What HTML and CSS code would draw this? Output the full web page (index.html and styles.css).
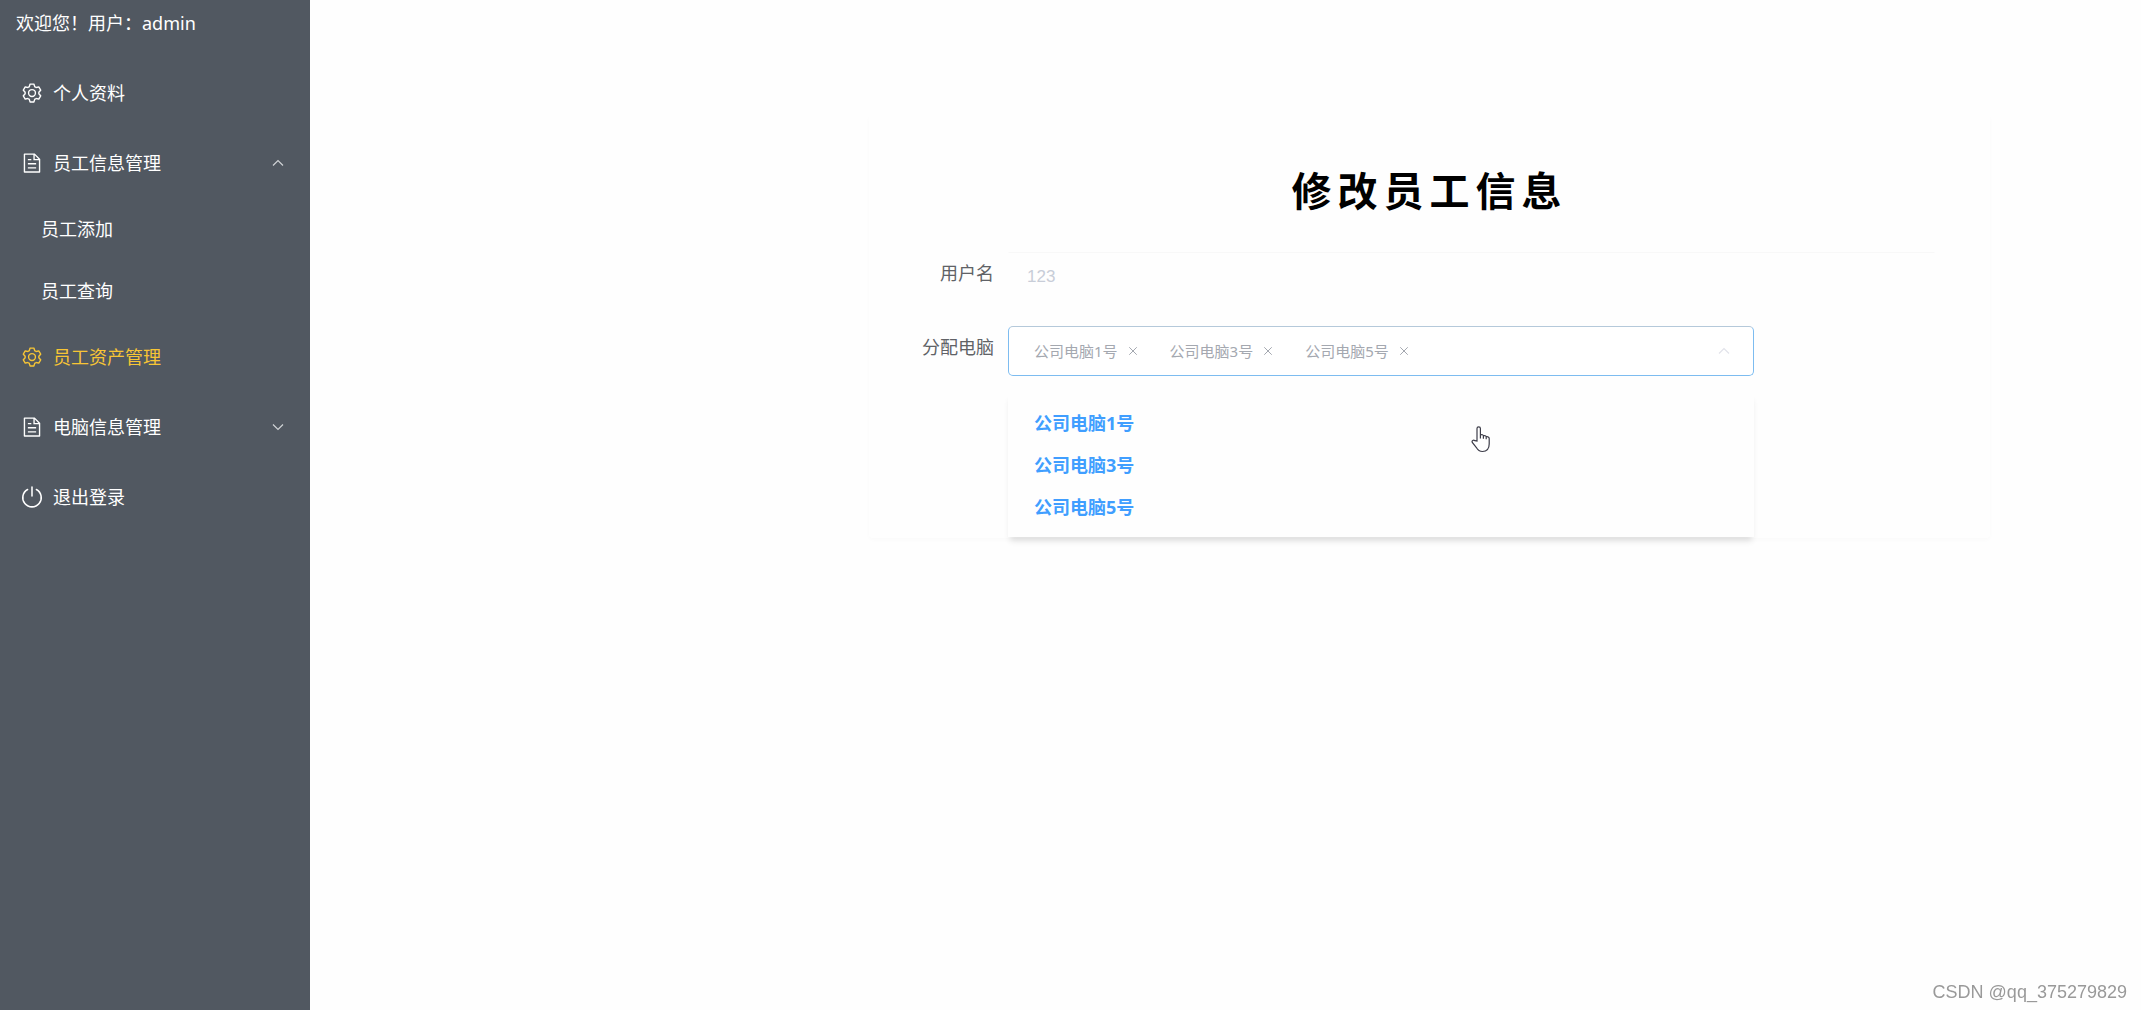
FILE: index.html
```html
<!DOCTYPE html>
<html lang="zh-CN">
<head>
<meta charset="utf-8">
<title>修改员工信息</title>
<link rel="stylesheet" href="styles.css">
</head>
<body>
<svg class="defs" aria-hidden="true">
  <symbol id="gear" viewBox="0 0 1024 1024"><path d="M600.704 64a32 32 0 0 1 30.464 22.208l35.2 109.376c14.784 7.232 28.928 15.36 42.432 24.512l112.384-24.192a32 32 0 0 1 34.432 15.36L944.32 364.8a32 32 0 0 1-4.032 37.504l-77.12 85.12a357.120 357.120 0 0 1 0 49.024l77.12 85.248a32 32 0 0 1 4.032 37.504l-88.704 153.600a32 32 0 0 1-34.432 15.296L708.800 803.904c-13.440 9.088-27.648 17.280-42.368 24.512l-35.264 109.376A32 32 0 0 1 600.704 960H423.296a32 32 0 0 1-30.464-22.208L357.696 828.480a351.616 351.616 0 0 1-42.560-24.640l-112.320 24.256a32 32 0 0 1-34.432-15.360L79.680 659.200a32 32 0 0 1 4.032-37.504l77.120-85.248a357.120 357.120 0 0 1 0-48.896l-77.120-85.248A32 32 0 0 1 79.680 364.800l88.704-153.600a32 32 0 0 1 34.432-15.296l112.320 24.256c13.568-9.152 27.776-17.408 42.560-24.640l35.200-109.312A32 32 0 0 1 423.232 64H600.640zm-23.424 64H446.720l-36.352 113.088-24.512 11.968a294.113 294.113 0 0 0-34.816 20.096l-22.656 15.360-116.224-25.088-65.280 113.152 79.680 88.192-1.920 27.136a293.120 293.120 0 0 0 0 40.192l1.920 27.136-79.808 88.192 65.344 113.152 116.224-25.024 22.656 15.296a294.113 294.113 0 0 0 34.816 20.096l24.512 11.968L446.720 896h130.688l36.480-113.152 24.448-11.904a288.282 288.282 0 0 0 34.752-20.096l22.592-15.296 116.288 25.024 65.280-113.152-79.744-88.192 1.920-27.136a293.120 293.120 0 0 0 0-40.256l-1.920-27.136 79.808-88.128-65.344-113.152-116.288 24.960-22.592-15.232a287.616 287.616 0 0 0-34.752-20.096l-24.448-11.904L577.344 128zM512 320a192 192 0 1 1 0 384 192 192 0 0 1 0-384zm0 64a128 128 0 1 0 0 256 128 128 0 0 0 0-256z"/></symbol>
  <symbol id="doc" viewBox="0 0 1024 1024"><path d="M832 384H576V128H192v768h640V384zm-26-64L640 154V320h166zM160 64h480l256 256v608a32 32 0 0 1-32 32H160a32 32 0 0 1-32-32V96a32 32 0 0 1 32-32zm160 448h384v64H320v-64zm0-192h160v64H320v-64zm0 384h384v64H320v-64z"/></symbol>
  <symbol id="power" viewBox="0 0 20 20"><path d="M6 3.200A8.400 8.400 0 1 0 14 3.200M10 1v8" fill="none" stroke="currentColor" stroke-width="1.400" stroke-linecap="round"/></symbol>
  <symbol id="up" viewBox="0 0 14 14"><path d="M2 9.500l5-5 5 5" fill="none" stroke="currentColor" stroke-width="1.200"/></symbol>
  <symbol id="down" viewBox="0 0 14 14"><path d="M2 4.500l5 5 5-5" fill="none" stroke="currentColor" stroke-width="1.200"/></symbol>
  <symbol id="close" viewBox="0 0 12 12"><path d="M1.500 1.500l9 9M10.500 1.500l-9 9" fill="none" stroke="currentColor" stroke-width="1.200"/></symbol>
</svg>
<div class="layout">
  <aside class="sidebar">
    <p class="welcome">欢迎您！用户：admin</p>
    <nav>
      <a class="item" href="#"><svg class="icon"><use href="#gear"/></svg>个人资料</a>
      <button class="item" type="button" aria-expanded="true"><svg class="icon"><use href="#doc"/></svg>员工信息管理<svg class="arrow"><use href="#up"/></svg></button>
      <a class="item sub" href="#">员工添加</a>
      <a class="item sub" href="#">员工查询</a>
      <a class="item active" href="#"><svg class="icon"><use href="#gear"/></svg>员工资产管理</a>
      <button class="item" type="button" aria-expanded="false"><svg class="icon"><use href="#doc"/></svg>电脑信息管理<svg class="arrow"><use href="#down"/></svg></button>
      <a class="item" href="#"><svg class="icon"><use href="#power"/></svg>退出登录</a>
    </nav>
  </aside>
  <main class="main">
    <form class="card">
      <h1>修改员工信息</h1>
      <div class="row">
        <label class="label" for="user">用户名</label>
        <input class="input" id="user" type="text" value="123" disabled>
      </div>
      <div class="row narrow">
        <span class="label" id="pc">分配电脑</span>
        <div class="picker">
          <div class="select" role="combobox" aria-labelledby="pc" aria-expanded="true" tabindex="0">
            <span class="tag">公司电脑1号<button type="button" aria-label="移除"><svg><use href="#close"/></svg></button></span>
            <span class="tag">公司电脑3号<button type="button" aria-label="移除"><svg><use href="#close"/></svg></button></span>
            <span class="tag">公司电脑5号<button type="button" aria-label="移除"><svg><use href="#close"/></svg></button></span>
            <svg class="caret"><use href="#up"/></svg>
          </div>
          <ul class="options" role="listbox" aria-labelledby="pc">
            <li role="option" aria-selected="true">公司电脑1号</li>
            <li role="option" aria-selected="true">公司电脑3号</li>
            <li role="option" aria-selected="true">公司电脑5号</li>
          </ul>
          <svg class="cursor" viewBox="0 0 20 28" aria-hidden="true"><path d="M6 16V3.500a1.700 1.700 0 0 1 3.400 0V10c1.500-.8 3 0 3 .8 1.300-.5 2.600 0 2.800 1 1.500-.4 3 .3 3 1.700V19c0 5-2.400 7.500-6.700 7.500-3 0-4.800-1.500-6.300-4.200L1.300 17.500c-.9-1.800 1.200-3 2.600-1.800zM9.400 10v3.500M12.400 10.800v3M15.200 11.800v2.500" fill="#fff" stroke="#3c3c48" stroke-width="1.200"/></svg>
        </div>
      </div>
    </form>
  </main>
</div>
<div class="watermark">CSDN @qq_375279829</div>
</body>
</html>
```
FILE: styles.css
```css
* { box-sizing: border-box; }
body { margin: 0; background: #fefefe; color: #606266; font: 18px/24px "Noto Sans", "Noto Sans CJK SC", sans-serif; }
button { font: inherit; color: inherit; background: none; border: 0; padding: 0; }
.defs { display: none; }
.layout { display: flex; min-height: 100vh; }
.sidebar { flex: 0 0 310px; background: #515861; color: #fff; }
.welcome { margin: 0; padding: 11px 16px 23px; }
.item { display: flex; align-items: center; width: 100%; height: 70px; padding: 0 25px 0 21px; color: #fff; text-decoration: none; text-align: left; }
.sub { height: 62px; padding-left: 41px; }
.active { color: #f7c535; }
.icon { width: 22px; height: 22px; margin-right: 10px; fill: currentColor; }
.arrow { width: 14px; height: 14px; margin-left: auto; color: #d0d3d6; }
.main { flex: 1; padding: 114px 151px 0 559px; }
.card { padding: 50px 55px 66px 0; border-radius: 4px; box-shadow: 0 2px 4px rgba(0, 0, 0, .02); min-height: 424px; }
h1 { margin: 0 0 34px 55px; text-align: center; color: #000; font-size: 40px; line-height: 54px; letter-spacing: 6px; }
.row { display: flex; margin-bottom: 24px; }
.narrow { margin-right: 181px; }
.label { flex: 0 0 139px; padding: 9px 14px 0 0; text-align: right; }
.input { flex: 1; min-width: 0; height: 50px; padding: 0 18px; border: 1px solid transparent; border-top-color: #f8f8f8; background: none; color: #c8cdd8; font: 17px "Liberation Sans", sans-serif; }
.picker { position: relative; flex: 1; }
.select { display: flex; align-items: center; gap: 32px; height: 50px; padding: 0 22px 0 25px; border: 1px solid #7dbcf0; border-top-color: #b5c9da; border-radius: 5px; background: #fff; color: #a4a8b0; font-size: 15px; }
.tag { display: flex; align-items: center; gap: 10px; }
.tag button, .tag svg { display: block; width: 10px; height: 10px; }
.caret { width: 14px; height: 14px; margin-left: auto; color: #e2e3ea; }
.options { position: absolute; top: 66px; left: 0; right: 0; margin: 0; padding: 10px 26px; height: 145px; list-style: none; background: #fefefe; color: #409eff; font-weight: 700; box-shadow: 0 6px 6px -2px rgba(0, 0, 0, .12); }
.options li { line-height: 42px; }
.cursor { position: absolute; top: 99px; left: 463px; width: 20px; height: 28px; }
.watermark { position: fixed; right: 14px; bottom: 6px; color: #999; font: 18px/24px "Liberation Sans", sans-serif; }
```
